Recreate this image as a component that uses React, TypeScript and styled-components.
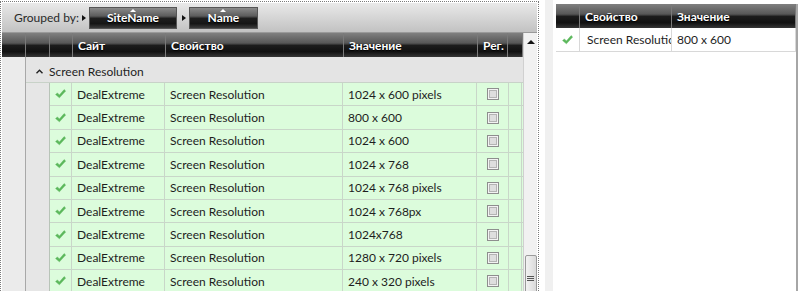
import React from 'react';
import styled, { createGlobalStyle } from 'styled-components';

const GlobalStyle = createGlobalStyle`
  html, body {
    margin: 0;
    padding: 0;
    background: #ffffff;
  }
  body {
    font-family: "Lato", "Open Sans", sans-serif;
    font-size: 12px;
    color: #1e1e1e;
  }
`;

const Page = styled.div`
  width: 800px;
  height: 291px;
  overflow: hidden;
  display: flex;
  align-items: flex-start;
  background: #ffffff;
`;

const LeftPanel = styled.div`
  margin-top: 1px;
  width: 539px;
  height: 300px;
  box-sizing: border-box;
  border: 1px dotted #7a7a7a;
  border-bottom: none;
  padding: 1px 0 0 1px;
  display: flex;
  flex-direction: column;
  flex-shrink: 0;
`;

const GroupBar = styled.div`
  height: 29px;
  display: flex;
  align-items: center;
  padding-left: 12px;
  background: linear-gradient(#e9e9e9, #c2c2c2);
  border-bottom: 1px solid #9a9a9a;
  margin-right: 1px;
`;

const GroupLabel = styled.span`
  color: #2a2a2a;
  font-size: 12px;
  margin-right: 3px;
`;

const Arrow = styled.span`
  width: 0;
  height: 0;
  border-top: 3px solid transparent;
  border-bottom: 3px solid transparent;
  border-left: 4px solid #111;
  margin-right: 3px;
`;

const Chip = styled.div<{ w: number }>`
  position: relative;
  width: ${p => p.w}px;
  height: 22px;
  box-sizing: border-box;
  display: flex;
  align-items: center;
  justify-content: center;
  margin-right: 5px;
  color: #fff;
  font-weight: 700;
  font-size: 12px;
  border: 1px solid #555;
  background: linear-gradient(#8a8a8a 0%, #5c5c5c 40%, #1e1e1e 52%, #151515 78%, #3a3a3a 100%);
  text-shadow: 0 1px 1px #000;
`;

const SortMark = styled.span`
  position: absolute;
  top: 1px;
  left: 50%;
  margin-left: -3px;
  width: 0;
  height: 0;
  border-left: 3px solid transparent;
  border-right: 3px solid transparent;
  border-bottom: 3px solid #fff;
`;

const GridArea = styled.div`
  flex: 1;
  display: flex;
`;

const GridMain = styled.div`
  width: 521px;
  display: flex;
  flex-direction: column;
`;

const HeaderRow = styled.div<{ cols: string }>`
  display: grid;
  grid-template-columns: ${p => p.cols};
  height: 24px;
  background: linear-gradient(#808080 0%, #575757 42%, #1c1c1c 52%, #111 78%, #363636 100%);
`;

const HeaderCell = styled.div`
  border-right: 1px solid #7a7a7a;
  box-sizing: border-box;
  display: flex;
  align-items: center;
  padding-left: 5px;
  color: #fff;
  font-weight: 700;
  font-size: 12px;
  white-space: nowrap;
  overflow: hidden;
  text-shadow: 0 1px 1px #000;
`;

const Body = styled.div`
  flex: 1;
  display: flex;
`;

const IndentCol = styled.div`
  width: 24px;
  background: #ebebeb;
  border-right: 1px solid #a8a8a8;
  box-sizing: border-box;
`;

const GroupContent = styled.div`
  flex: 1;
  display: flex;
  flex-direction: column;
  background: #e6e6e6;
`;

const GroupRow = styled.div`
  height: 26px;
  box-sizing: border-box;
  padding: 3px 0 0 10px;
  display: flex;
  align-items: center;
  gap: 6px;
  color: #1e1e1e;
  border-bottom: 1px solid #c8d2c8;
  background: #e4e4e4;
`;

const Rows = styled.div`
  margin-left: 23px;
  border-left: 1px solid #b8c4b8;
`;

const DataRow = styled.div`
  display: grid;
  grid-template-columns: 22px 93px 178px 134px 32px 13px;
  height: 23.4px;
  box-sizing: border-box;
  background: #dcfcdc;
  border-bottom: 1px solid #c9d6c9;
`;

const Cell = styled.div<{ pad?: number; center?: boolean }>`
  border-right: 1px solid #c9d6c9;
  display: flex;
  align-items: center;
  justify-content: ${p => (p.center ? 'center' : 'flex-start')};
  padding-left: ${p => p.pad ?? 0}px;
  white-space: nowrap;
  overflow: hidden;
`;

const ScrollBar = styled.div`
  width: 14px;
  background: #f1f1f1;
  border-left: 1px solid #d0d0d0;
  box-sizing: border-box;
  display: flex;
  flex-direction: column;
  align-items: center;
`;

const UpArrow = styled.span`
  margin-top: 7px;
  width: 0;
  height: 0;
  border-left: 4px solid transparent;
  border-right: 4px solid transparent;
  border-bottom: 4px solid #111;
`;

const Thumb = styled.div`
  margin-top: auto;
  width: 12px;
  height: 46px;
  box-sizing: border-box;
  border: 1px solid #9a9a9a;
  border-radius: 2px;
  background: linear-gradient(90deg, #f2f2f2, #dadada);
  display: flex;
  flex-direction: column;
  justify-content: center;
  align-items: center;
  gap: 1px;
`;

const Grip = styled.span`
  width: 7px;
  height: 1px;
  background: #555;
`;

const Splitter = styled.div`
  width: 17px;
  height: 291px;
  flex-shrink: 0;
  display: flex;
  justify-content: center;
`;

const SplitterBand = styled.div`
  margin-left: 2px;
  width: 8px;
  background: #f0f0f0;
`;

const RightPanel = styled.div`
  margin-top: 4px;
  width: 242px;
  height: 300px;
  box-sizing: border-box;
  border-right: 2px solid #a6a6a6;
  background: #fff;
`;

const RightRow = styled.div`
  display: grid;
  grid-template-columns: 24px 92px 1fr;
  height: 24px;
  box-sizing: border-box;
  background: #fff;
  border-bottom: 1px solid #d8d8d8;
`;

const RightCell = styled.div<{ pad?: number; center?: boolean }>`
  border-right: 1px solid #d8d8d8;
  display: flex;
  align-items: center;
  justify-content: ${p => (p.center ? 'center' : 'flex-start')};
  padding-left: ${p => p.pad ?? 0}px;
  white-space: nowrap;
  overflow: hidden;
`;

const Box = styled.span`
  width: 12px;
  height: 12px;
  box-sizing: border-box;
  border: 1px solid #8e8e8e;
  background: #f3f3f3;
  display: flex;
  align-items: center;
  justify-content: center;
`;

const BoxInner = styled.span`
  width: 6px;
  height: 6px;
  border: 1px solid #b4b4b4;
  background: #dedede;
`;

const Check = () => (
  <svg width="11" height="10" viewBox="0 0 10 9">
    <path d="M0.5 5 L2.2 3.5 L4 5.3 L8.3 0.5 L9.7 1.8 L4 8 Z" fill="#5cb85c" strokeLinejoin="round" stroke="#5cb85c" strokeWidth="0.4" />
  </svg>
);

const Chevron = () => (
  <svg width="7" height="5" viewBox="0 0 7 5">
    <path d="M0.5 4.2 L3.5 1.2 L6.5 4.2" stroke="#222" strokeWidth="1.4" fill="none" />
  </svg>
);

const values = [
  '1024 x 600 pixels',
  '800 x 600',
  '1024 x 600',
  '1024 x 768',
  '1024 x 768 pixels',
  '1024 x 768px',
  '1024x768',
  '1280 x 720 pixels',
  '240 x 320 pixels',
];

const App: React.FC = () => (
  <>
    <GlobalStyle />
    <Page>
      <LeftPanel>
        <GroupBar>
          <GroupLabel>Grouped by:</GroupLabel>
          <Arrow />
          <Chip w={88}>
            <SortMark />
            SiteName
          </Chip>
          <Arrow />
          <Chip w={69}>
            <SortMark />
            Name
          </Chip>
        </GroupBar>
        <GridArea>
          <GridMain>
            <HeaderRow cols="24px 24px 23px 93px 178px 134px 30px 15px">
              <HeaderCell />
              <HeaderCell />
              <HeaderCell />
              <HeaderCell>Сайт</HeaderCell>
              <HeaderCell>Свойство</HeaderCell>
              <HeaderCell>Значение</HeaderCell>
              <HeaderCell>Рег.</HeaderCell>
              <HeaderCell />
            </HeaderRow>
            <Body>
              <IndentCol />
              <GroupContent>
                <GroupRow>
                  <Chevron />
                  Screen Resolution
                </GroupRow>
                <Rows>
                  {values.map(v => (
                    <DataRow key={v}>
                      <Cell center>
                        <Check />
                      </Cell>
                      <Cell pad={5}>DealExtreme</Cell>
                      <Cell pad={5}>Screen Resolution</Cell>
                      <Cell pad={5}>{v}</Cell>
                      <Cell center>
                        <Box>
                          <BoxInner />
                        </Box>
                      </Cell>
                      <Cell />
                    </DataRow>
                  ))}
                </Rows>
              </GroupContent>
            </Body>
          </GridMain>
          <ScrollBar>
            <UpArrow />
            <Thumb>
              <Grip />
              <Grip />
              <Grip />
            </Thumb>
          </ScrollBar>
        </GridArea>
      </LeftPanel>
      <Splitter>
        <SplitterBand />
      </Splitter>
      <RightPanel>
        <HeaderRow cols="24px 92px 1fr">
          <HeaderCell />
          <HeaderCell>Свойство</HeaderCell>
          <HeaderCell>Значение</HeaderCell>
        </HeaderRow>
        <RightRow>
          <RightCell center>
            <Check />
          </RightCell>
          <RightCell pad={7}>Screen Resolution</RightCell>
          <RightCell pad={5}>800 x 600</RightCell>
        </RightRow>
      </RightPanel>
    </Page>
  </>
);

export default App;
